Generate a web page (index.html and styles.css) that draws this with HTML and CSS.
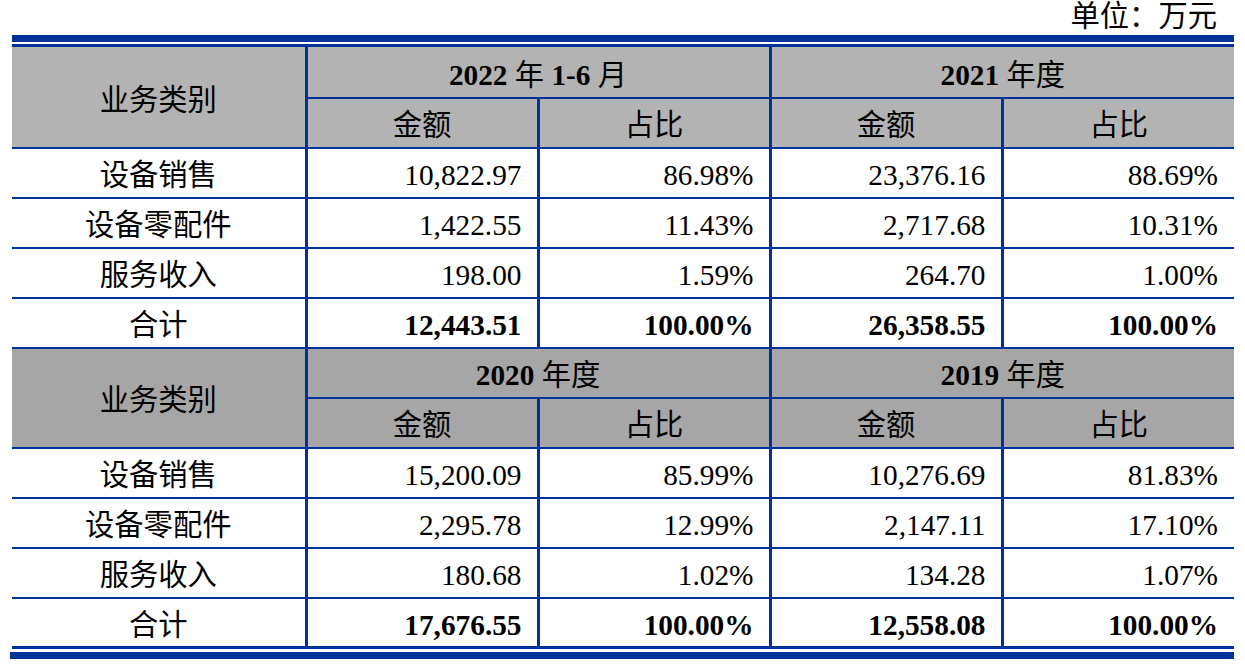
FILE: index.html
```html
<!DOCTYPE html>
<html lang="zh-CN">
<head>
<meta charset="utf-8">
<title>业务类别收入构成</title>
<link rel="stylesheet" href="styles.css">
</head>
<body>
<div class="page">
  <div class="unit">单位：万元</div>
  <div class="rule-thick"></div>
  <table class="data">
    <colgroup>
      <col class="c-cat">
      <col class="c-val"><col class="c-val"><col class="c-val"><col class="c-val">
    </colgroup>
    <tbody>
      <tr class="head head-a first">
        <th rowspan="2" class="cat">业务类别</th>
        <th colspan="2" class="year"><b>2022</b> 年 <b>1-6</b> 月</th>
        <th colspan="2" class="year last"><b>2021</b> 年度</th>
      </tr>
      <tr class="head head-a">
        <th>金额</th><th>占比</th><th>金额</th><th class="last">占比</th>
      </tr>
      <tr><td class="cat">设备销售</td><td class="num">10,822.97</td><td class="num">86.98%</td><td class="num">23,376.16</td><td class="num last">88.69%</td></tr>
      <tr><td class="cat">设备零配件</td><td class="num">1,422.55</td><td class="num">11.43%</td><td class="num">2,717.68</td><td class="num last">10.31%</td></tr>
      <tr><td class="cat">服务收入</td><td class="num">198.00</td><td class="num">1.59%</td><td class="num">264.70</td><td class="num last">1.00%</td></tr>
      <tr class="total"><td class="cat">合计</td><td class="num">12,443.51</td><td class="num">100.00%</td><td class="num">26,358.55</td><td class="num last">100.00%</td></tr>

      <tr class="head head-b">
        <th rowspan="2" class="cat">业务类别</th>
        <th colspan="2" class="year"><b>2020</b> 年度</th>
        <th colspan="2" class="year last"><b>2019</b> 年度</th>
      </tr>
      <tr class="head head-b">
        <th>金额</th><th>占比</th><th>金额</th><th class="last">占比</th>
      </tr>
      <tr><td class="cat">设备销售</td><td class="num">15,200.09</td><td class="num">85.99%</td><td class="num">10,276.69</td><td class="num last">81.83%</td></tr>
      <tr><td class="cat">设备零配件</td><td class="num">2,295.78</td><td class="num">12.99%</td><td class="num">2,147.11</td><td class="num last">17.10%</td></tr>
      <tr><td class="cat">服务收入</td><td class="num">180.68</td><td class="num">1.02%</td><td class="num">134.28</td><td class="num last">1.07%</td></tr>
      <tr class="total"><td class="cat">合计</td><td class="num">17,676.55</td><td class="num">100.00%</td><td class="num">12,558.08</td><td class="num last">100.00%</td></tr>
    </tbody>
  </table>
  <div class="rule-bottom"></div>
</div>
</body>
</html>
```

FILE: styles.css
```css
html, body {
  margin: 0;
  padding: 0;
  background: #ffffff;
}

body {
  font-family: "Liberation Serif", "Noto Sans CJK SC", serif;
  font-size: 29.3px;
  color: #000000;
}

.page {
  width: 1222px;
  margin-left: 12px;
}

.unit {
  height: 35px;
  line-height: 32px;
  text-align: right;
  padding-right: 17px;
  box-sizing: border-box;
}

.rule-thick {
  height: 7px;
  background: #003399;
  margin-bottom: 2px;
}

.data {
  width: 1222px;
  table-layout: fixed;
  border-collapse: collapse;
  border-top: 3px solid #003399;
  border-bottom: 3px solid #003399;
}

.c-cat { width: 294px; }
.c-val { width: 232px; }

.data tr {
  height: 50px;
}

.data tr.first {
  height: 52px;
}

.data th,
.data td {
  border-top: 2px solid #003399;
  border-bottom: 2px solid #003399;
  border-left: 3px solid #003399;
  border-right: 3px solid #003399;
  padding: 7px 0 0 0;
  line-height: 1;
  vertical-align: middle;
  white-space: nowrap;
}

.data .cat {
  border-left: none;
  text-align: center;
  font-weight: normal;
}

.data .last {
  border-right: none;
}

.data th {
  font-weight: normal;
  text-align: center;
}

.head-a th { background: #b3b3b3; }
.head-b th { background: #a6a6a6; }

.data th b { font-weight: bold; }

.data td.num {
  text-align: right;
  padding-right: 15px;
}

.data td.num.last {
  padding-right: 16px;
}

.total td.num {
  font-weight: bold;
}

.rule-bottom {
  height: 7px;
  background: #003399;
  margin-top: 3px;
  margin-left: -2px;
}
```
